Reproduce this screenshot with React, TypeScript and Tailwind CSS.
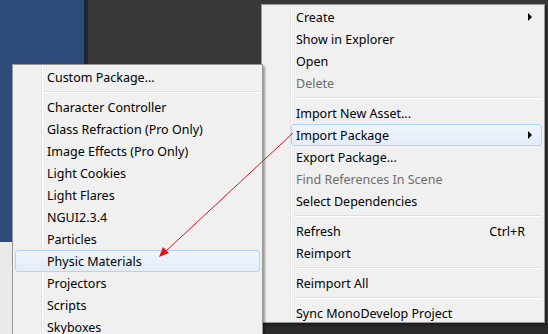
import React from 'react';

type Item =
  | { kind: 'sep' }
  | { kind: 'item'; label: string; disabled?: boolean; sub?: boolean; shortcut?: string; active?: boolean };

const rightItems: Item[] = [
  { kind: 'item', label: 'Create', sub: true },
  { kind: 'item', label: 'Show in Explorer' },
  { kind: 'item', label: 'Open' },
  { kind: 'item', label: 'Delete', disabled: true },
  { kind: 'sep' },
  { kind: 'item', label: 'Import New Asset...' },
  { kind: 'item', label: 'Import Package', sub: true, active: true },
  { kind: 'item', label: 'Export Package...' },
  { kind: 'item', label: 'Find References In Scene', disabled: true },
  { kind: 'item', label: 'Select Dependencies' },
  { kind: 'sep' },
  { kind: 'item', label: 'Refresh', shortcut: 'Ctrl+R' },
  { kind: 'item', label: 'Reimport' },
  { kind: 'sep' },
  { kind: 'item', label: 'Reimport All' },
  { kind: 'sep' },
  { kind: 'item', label: 'Sync MonoDevelop Project' },
];

const leftItems: Item[] = [
  { kind: 'item', label: 'Custom Package...' },
  { kind: 'sep' },
  { kind: 'item', label: 'Character Controller' },
  { kind: 'item', label: 'Glass Refraction (Pro Only)' },
  { kind: 'item', label: 'Image Effects (Pro Only)' },
  { kind: 'item', label: 'Light Cookies' },
  { kind: 'item', label: 'Light Flares' },
  { kind: 'item', label: 'NGUI2.3.4' },
  { kind: 'item', label: 'Particles' },
  { kind: 'item', label: 'Physic Materials', active: true },
  { kind: 'item', label: 'Projectors' },
  { kind: 'item', label: 'Scripts' },
  { kind: 'item', label: 'Skyboxes' },
];

const MenuRow: React.FC<{ item: Item; fullHighlight?: boolean }> = ({ item, fullHighlight }) => {
  if (item.kind === 'sep') {
    return (
      <div className="h-[8px] flex flex-col justify-center pl-[32px] pr-[3px]">
        <div className="h-px bg-[#e0e0e0]" />
        <div className="h-px bg-white" />
      </div>
    );
  }
  return (
    <div className="relative h-[22px] flex items-center pl-[34px] pr-[18px]">
      {item.active && (
        <div
          className={`absolute top-0 bottom-0 right-[2px] rounded-[3px] border border-[#b4d2f5] bg-gradient-to-b from-[#f0f5fc] to-[#e3ecf8] ${
            fullHighlight ? 'left-[2px]' : 'left-[29px]'
          }`}
        />
      )}
      <span className={`relative flex-1 pt-[2px] ${item.disabled ? 'text-[#6d6d6d]' : 'text-black'}`}>{item.label}</span>
      {item.shortcut && <span className="relative pt-[2px] mr-[1px] text-black">{item.shortcut}</span>}
      {item.sub && (
        <svg className="absolute right-[12px] top-[7px]" width="4" height="8" viewBox="0 0 4 8">
          <path d="M0 0 L4 4 L0 8 Z" fill="#000" />
        </svg>
      )}
    </div>
  );
};

const Menu: React.FC<{ items: Item[]; className: string; fullHighlight?: boolean }> = ({ items, className, fullHighlight }) => (
  <div
    className={`absolute bg-[#f0f0f0] border border-[#979797] shadow-[2px_2px_2px_rgba(0,0,0,0.35)] text-[12.5px] ${className}`}
    style={{ fontFamily: '"Noto Sans", "Open Sans", sans-serif' }}
  >
    <div className="absolute top-[1px] bottom-[1px] left-[28px] w-px bg-[#e2e3e3]" />
    <div className="absolute top-[1px] bottom-[1px] left-[29px] w-px bg-white" />
    <div className="relative">
      {items.map((it, i) => (
        <MenuRow key={i} item={it} fullHighlight={fullHighlight} />
      ))}
    </div>
  </div>
);

export default function App() {
  return (
    <div className="relative w-[548px] h-[334px] overflow-hidden flex bg-[#383838]">
      <div className="w-[84px] flex flex-col">
        <div className="h-[242px] bg-[#2e4b7b]" />
        <div className="flex-1 bg-[#e9e9e9]" />
      </div>
      <div className="w-[4px] bg-[#1e2835]" />
      <div className="flex-1 flex flex-col">
        <div className="flex-1 bg-[#383838]" />
        <div className="h-[11px] bg-[#2a2a2a]" />
      </div>

      <Menu items={rightItems} className="left-[261px] top-[4px] w-[284px] h-[319px] pt-[1px]" />
      <Menu items={leftItems} className="left-[12px] top-[64px] w-[251px] h-[290px] pt-[1px]" fullHighlight />

      <svg className="absolute left-0 top-0 pointer-events-none" width="548" height="334">
        <line x1="293" y1="133" x2="166" y2="251" stroke="#d8141c" strokeWidth="1" />
        <path d="M159 257 L163 247 L169 253 Z" fill="#e3141c" />
      </svg>
    </div>
  );
}
